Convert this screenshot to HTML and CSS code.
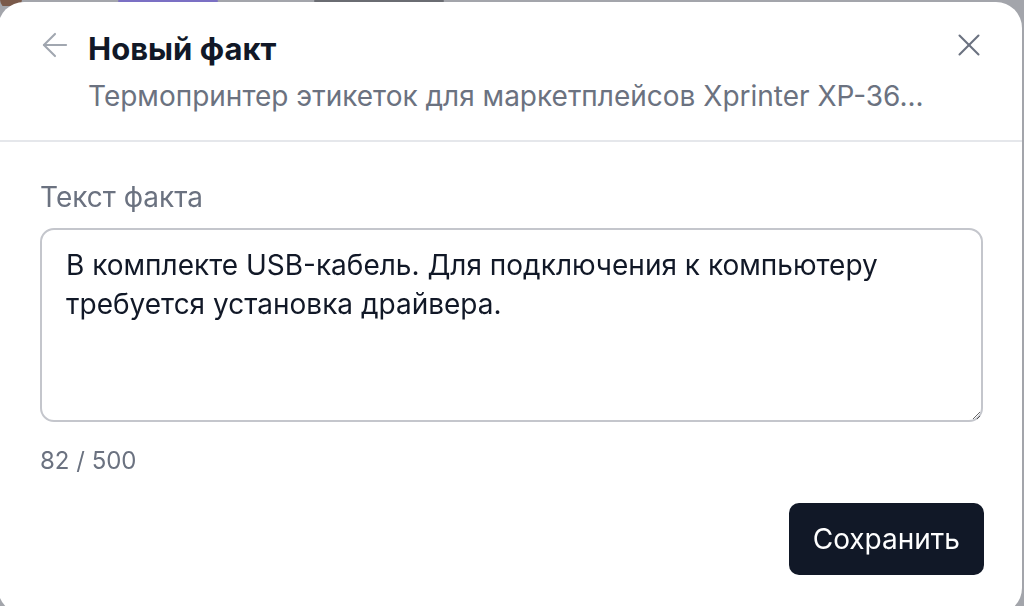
FILE: index.html
```
<!DOCTYPE html>
<html lang="ru">
<head>
    <meta charset="UTF-8">
    <title>Новый факт</title>
    <link rel="stylesheet" href="styles.css">
</head>
<body>
    <div class="backdrop">
        <div class="page-strip">
            <span class="strip-avatar"></span>
            <span class="strip-chip"></span>
            <span class="strip-chip dark"></span>
        </div>
    </div>

    <div class="dialog">
        <div class="dialog-header">
            <button class="icon-btn back-btn" aria-label="Назад">
                <svg width="38" height="38" viewBox="0 0 24 24" fill="none" stroke="currentColor" stroke-width="1.3" stroke-linecap="round" stroke-linejoin="round">
                    <path d="M19 12H5"/>
                    <path d="M12 19l-7-7 7-7"/>
                </svg>
            </button>
            <div class="titles">
                <h1>Новый факт</h1>
                <div class="subtitle">Термопринтер этикеток для маркетплейсов Xprinter XP-36...</div>
            </div>
            <button class="icon-btn close-btn" aria-label="Закрыть">
                <svg width="38" height="38" viewBox="0 0 24 24" fill="none" stroke="currentColor" stroke-width="1.3" stroke-linecap="round">
                    <path d="M18 6L6 18"/>
                    <path d="M6 6l12 12"/>
                </svg>
            </button>
        </div>

        <div class="dialog-body">
            <label for="factText">Текст факта</label>
            <textarea id="factText" maxlength="500">В комплекте USB-кабель. Для подключения к компьютеру требуется установка драйвера.</textarea>
            <div class="counter"><span id="count">82</span> / 500</div>
            <div class="actions">
                <button class="save-btn">Сохранить</button>
            </div>
        </div>
    </div>

    <script>
        const area = document.getElementById('factText');
        area.addEventListener('input', () => {
            document.getElementById('count').textContent = area.value.length;
        });
    </script>
</body>
</html>
```

FILE: styles.css
```
* {
    margin: 0;
    padding: 0;
    box-sizing: border-box;
}

body {
    font-family: Inter, "Noto Sans", sans-serif;
    background: #9ea0a6;
    color: #111827;
    height: 100vh;
    overflow: hidden;
}

.backdrop {
    height: 100%;
    background: #a3a5ab;
}

.page-strip {
    display: flex;
    align-items: flex-start;
    gap: 96px;
    height: 6px;
    overflow: hidden;
}

.strip-avatar {
    width: 22px;
    height: 22px;
    border-radius: 50%;
    background: #7a5a4a;
    margin-top: -12px;
}

.strip-chip {
    width: 100px;
    height: 2px;
    background: #7b70c4;
    border-radius: 1px;
}

.strip-chip.dark {
    width: 130px;
    background: #6a6c72;
}

.dialog {
    position: fixed;
    top: 2px;
    left: -2px;
    width: 1024px;
    height: 612px;
    background: #fff;
    border-radius: 26px;
    display: flex;
    flex-direction: column;
}

.dialog-header {
    display: flex;
    align-items: flex-start;
    gap: 14px;
    padding: 28px 34px 25px 38px;
    border-bottom: 2px solid #e5e7eb;
}

.icon-btn {
    border: none;
    background: none;
    display: flex;
    align-items: center;
    justify-content: center;
    cursor: pointer;
}

.back-btn {
    color: #a1a7b0;
    margin-top: -4px;
}

.close-btn {
    color: #6b7280;
    margin-left: auto;
    margin-top: -4px;
}

.titles {
    display: flex;
    flex-direction: column;
    gap: 9px;
}

h1 {
    font-size: 31px;
    font-weight: 700;
    line-height: 38px;
    color: #111827;
}

.subtitle {
    font-size: 28px;
    line-height: 38px;
    color: #6b7280;
}

.dialog-body {
    padding: 36px 39px 0 42px;
    display: flex;
    flex-direction: column;
}

label {
    font-size: 28px;
    line-height: 38px;
    color: #6b7280;
    margin-bottom: 12px;
}

textarea {
    width: 100%;
    height: 194px;
    padding: 16px 24px;
    border: 2px solid #c4c6cc;
    border-radius: 14px;
    font-family: Inter, "Noto Sans", sans-serif;
    font-size: 28px;
    line-height: 39px;
    color: #111827;
    resize: vertical;
    outline: none;
}

.counter {
    margin-top: 23px;
    font-size: 24px;
    line-height: 32px;
    color: #6b7280;
}

.actions {
    display: flex;
    justify-content: flex-end;
    margin-top: 26px;
    margin-right: -1px;
}

.save-btn {
    background: #111827;
    color: #fff;
    border: none;
    border-radius: 10px;
    padding: 0 24px;
    height: 72px;
    font-family: Inter, "Noto Sans", sans-serif;
    font-size: 28px;
    font-weight: 400;
    cursor: pointer;
}
```
